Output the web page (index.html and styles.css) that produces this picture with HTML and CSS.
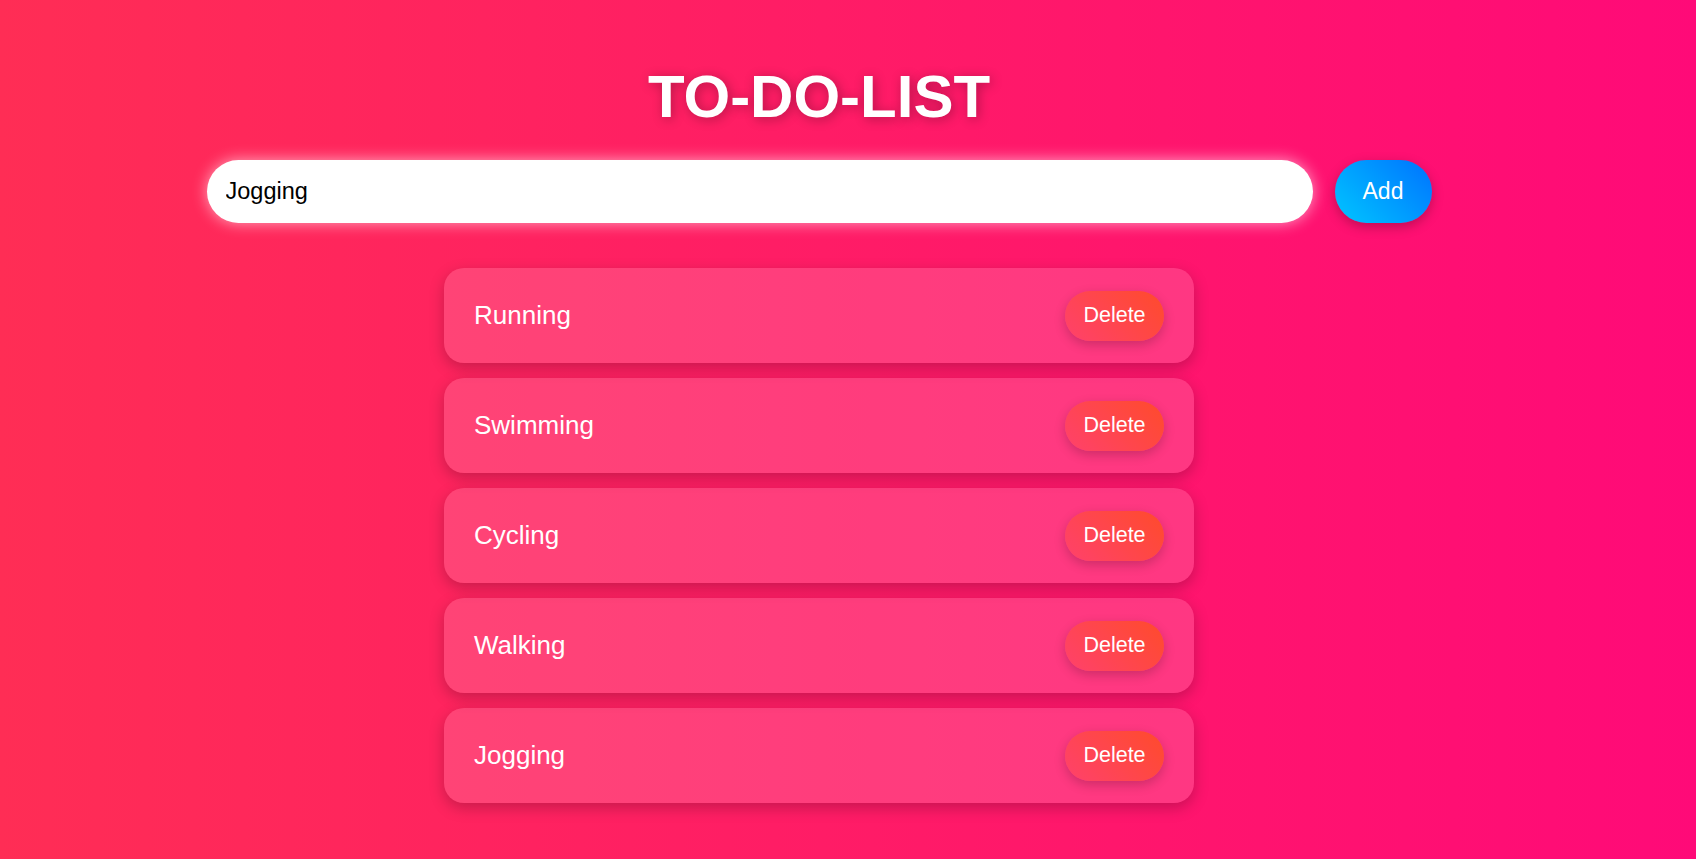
FILE: index.html
```html
<!DOCTYPE html>
<html lang="en">
<head>
    <meta charset="UTF-8">
    <meta name="viewport" content="width=device-width, initial-scale=1.0">
    <title>To-Do-List</title>
    <link rel="stylesheet" href="styles.css">
</head>
<body>
    <main class="app">
        <h1 class="title">TO-DO-LIST</h1>

        <form class="entry" id="entry-form">
            <input type="text" class="entry-input" id="task-input" value="Jogging">
            <button type="submit" class="add-btn">Add</button>
        </form>

        <ul class="task-list" id="task-list">
            <li class="task">
                <span class="task-text">Running</span>
                <button class="delete-btn">Delete</button>
            </li>
            <li class="task">
                <span class="task-text">Swimming</span>
                <button class="delete-btn">Delete</button>
            </li>
            <li class="task">
                <span class="task-text">Cycling</span>
                <button class="delete-btn">Delete</button>
            </li>
            <li class="task">
                <span class="task-text">Walking</span>
                <button class="delete-btn">Delete</button>
            </li>
            <li class="task">
                <span class="task-text">Jogging</span>
                <button class="delete-btn">Delete</button>
            </li>
        </ul>
    </main>
</body>
</html>
```

FILE: styles.css
```css
* {
    margin: 0;
    padding: 0;
    box-sizing: border-box;
}

body {
    font-family: "Liberation Sans", Arial, sans-serif;
    background: linear-gradient(to right, #ff2d55, #ff0a78);
    min-height: 100vh;
    color: #fff;
    padding-right: 58px;
}

.app {
    display: flex;
    flex-direction: column;
    align-items: center;
    padding-top: 62px;
}

.title {
    font-size: 60px;
    font-weight: 700;
    line-height: 69px;
    text-shadow: 2px 2px 12px rgba(0, 0, 0, 0.3);
    margin-bottom: 29px;
}

.entry {
    display: flex;
    gap: 22px;
    margin-bottom: 45px;
}

.entry-input {
    width: 1106px;
    height: 63px;
    padding: 0 19px;
    border: none;
    border-radius: 32px;
    background: #fff;
    font-family: inherit;
    font-size: 23.5px;
    color: #000;
    outline: none;
    box-shadow: 0 0 15px rgba(255, 255, 255, 0.6);
}

.add-btn {
    width: 97px;
    height: 63px;
    border: none;
    border-radius: 32px;
    background: linear-gradient(45deg, #00c6ff, #0072ff);
    color: #fff;
    font-family: inherit;
    font-size: 23px;
    cursor: pointer;
    box-shadow: 0 4px 12px rgba(0, 0, 0, 0.25);
}

.task-list {
    list-style: none;
    display: flex;
    flex-direction: column;
    gap: 15px;
    width: 750px;
}

.task {
    display: flex;
    align-items: center;
    justify-content: space-between;
    height: 95px;
    padding: 0 30px;
    border-radius: 20px;
    background: rgba(255, 255, 255, 0.15);
    box-shadow: 0 5px 15px rgba(0, 0, 0, 0.22);
}

.task-text {
    font-size: 26px;
}

.delete-btn {
    width: 99px;
    height: 50px;
    border: none;
    border-radius: 25px;
    background: linear-gradient(45deg, #ff416c, #ff4b2b);
    color: #fff;
    font-family: inherit;
    font-size: 21.5px;
    cursor: pointer;
    box-shadow: 0 4px 12px rgba(0, 0, 0, 0.2);
}
```
